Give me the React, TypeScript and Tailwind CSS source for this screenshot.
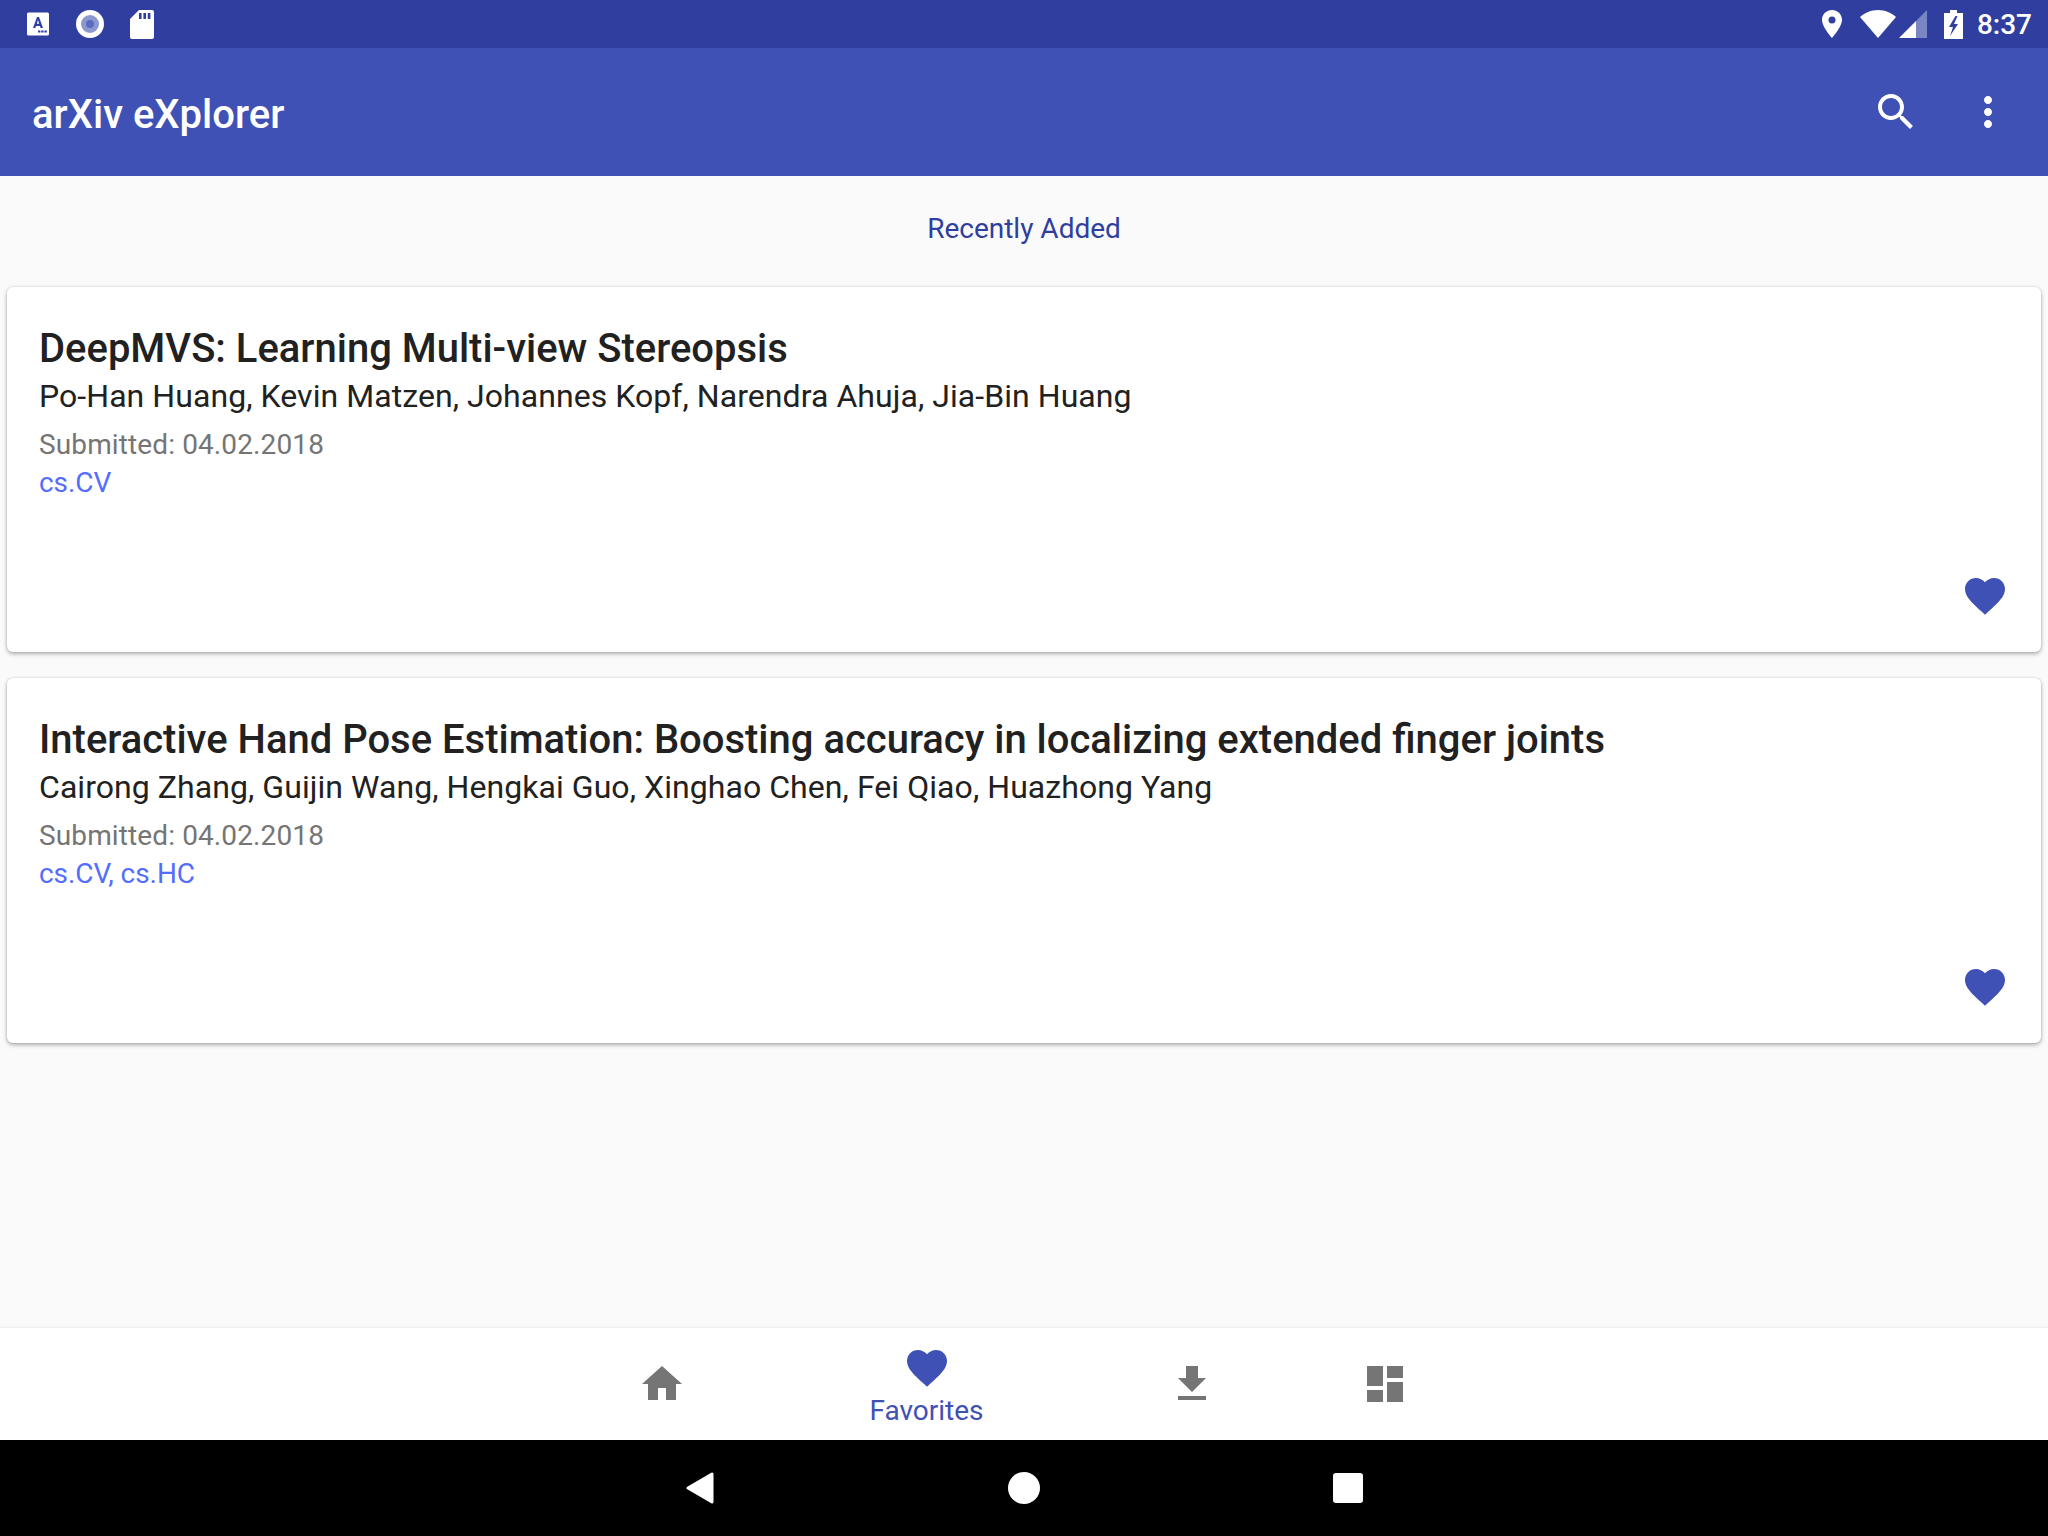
const HEART =
  'M12 21.35l-1.45-1.32C5.4 15.36 2 12.28 2 8.5 2 5.42 4.42 3 7.5 3c1.74 0 3.34.81 4.5 2.09C13.16 3.81 14.76 3 16.5 3 19.58 3 22 5.42 22 8.5c0 3.78-3.4 6.86-8.55 11.54L12 21.35z';

const papers = [
  {
    title: 'DeepMVS: Learning Multi-view Stereopsis',
    authors: 'Po-Han Huang, Kevin Matzen, Johannes Kopf, Narendra Ahuja, Jia-Bin Huang',
    submitted: 'Submitted: 04.02.2018',
    tags: 'cs.CV',
  },
  {
    title: 'Interactive Hand Pose Estimation: Boosting accuracy in localizing extended finger joints',
    authors: 'Cairong Zhang, Guijin Wang, Hengkai Guo, Xinghao Chen, Fei Qiao, Huazhong Yang',
    submitted: 'Submitted: 04.02.2018',
    tags: 'cs.CV, cs.HC',
  },
];

const Icon = ({ d, className }: { d: string; className: string }) => (
  <svg viewBox="0 0 24 24" className={className} fill="currentColor">
    <path d={d} />
  </svg>
);

const StatusBar = () => (
  <div className="flex h-12 items-center justify-between bg-[#303f9f] pl-[27px] pr-4 text-white">
    <div className="flex items-center">
      <svg viewBox="0 0 22 24" className="h-6 w-[22px]">
        <rect x="0" y="0.5" width="22" height="23" rx="1.5" fill="#fff" />
        <path d="M6 16 L10 5 H12 L16 16 H13.6 L13 14 H9 L8.4 16 Z M9.8 11.8 H12.2 L11 8 Z" fill="#303f9f" />
        <path d="M11 18.5h2.4v2H11zM14.2 18.5h2.4v2h-2.4zM17.4 18.5h2.4v2h-2.4z" fill="#303f9f" />
      </svg>
      <svg viewBox="0 0 28 28" className="ml-[27px] h-7 w-7">
        <circle cx="14" cy="14" r="14" fill="#fff" />
        <circle cx="14" cy="14" r="9" fill="#8c97d0" />
        <circle cx="14" cy="14" r="4" fill="#5c6bc0" />
      </svg>
      <svg viewBox="0 0 24 29" className="ml-[26px] h-[29px] w-6">
        <path d="M9 0 H22 A2 2 0 0 1 24 2 V27 A2 2 0 0 1 22 29 H2 A2 2 0 0 1 0 27 V9 Z" fill="#fff" />
        <path d="M9 3h2.6v6H9zM13.4 3H16v6h-2.6zM17.8 3h2.6v6h-2.6z" fill="#303f9f" />
      </svg>
    </div>
    <div className="flex items-center">
      <svg viewBox="0 0 20 28" className="h-7 w-5">
        <path
          fillRule="evenodd"
          d="M10 0 C4.5 0 0 4.4 0 9.8 C0 17 10 28 10 28 C10 28 20 17 20 9.8 C20 4.4 15.5 0 10 0 Z M10 6.4 A3.5 3.5 0 1 1 10 13.4 A3.5 3.5 0 1 1 10 6.4 Z"
          fill="#fff"
        />
      </svg>
      <svg viewBox="0 0 36 28" className="ml-[18px] h-7 w-9">
        <path d="M18 28 L0 7 C4.5 2.8 11 0 18 0 C25 0 31.5 2.8 36 7 Z" fill="#fff" />
      </svg>
      <svg viewBox="0 0 28 28" className="ml-[3px] h-7 w-7">
        <path d="M28 0 V28 H17 V11 Z" fill="#7a86c4" />
        <path d="M17 11 V28 H0 Z" fill="#fff" />
      </svg>
      <svg viewBox="0 0 19 29" className="ml-[17px] h-[29px] w-[19px]">
        <path d="M6 0 H13 V3 H19 V29 H0 V3 H6 Z" fill="#fff" />
        <path d="M11.5 6 L5 17 H9 L6 26 L14 14 H10 L13.5 6 Z" fill="#303f9f" />
      </svg>
      <span className="ml-[14px] pt-[2px] text-[28px] font-medium leading-none">8:37</span>
    </div>
  </div>
);

const Toolbar = () => (
  <div className="flex h-[128px] items-center justify-between bg-[#3f51b5] pl-8 pr-9 text-white">
    <span className="pt-[6px] text-[40px] font-medium leading-none">arXiv eXplorer</span>
    <div className="flex items-center gap-11">
      <Icon
        className="h-12 w-12"
        d="M15.5 14h-.79l-.28-.27C15.41 12.59 16 11.11 16 9.5 16 5.91 13.09 3 9.5 3S3 5.91 3 9.5 5.91 16 9.5 16c1.61 0 3.09-.59 4.23-1.57l.27.28v.79l5 4.99L20.49 19l-4.99-5zm-6 0C7.01 14 5 11.99 5 9.5S7.01 5 9.5 5 14 7.01 14 9.5 11.99 14 9.5 14z"
      />
      <Icon
        className="h-12 w-12"
        d="M12 8c1.1 0 2-.9 2-2s-.9-2-2-2-2 .9-2 2 .9 2 2 2zm0 2c-1.1 0-2 .9-2 2s.9 2 2 2 2-.9 2-2-.9-2-2-2zm0 6c-1.1 0-2 .9-2 2s.9 2 2 2 2-.9 2-2-.9-2-2-2z"
      />
    </div>
  </div>
);

const PaperCard = ({ paper }: { paper: (typeof papers)[number] }) => (
  <div className="flex h-[365px] flex-col rounded-[6px] bg-white pl-8 pr-8 pt-[38px] shadow-[0_2px_4px_rgba(0,0,0,0.3),0_0_2px_rgba(0,0,0,0.15)]">
    <h2 className="text-[39.97px] font-medium leading-[47px] text-[#212121]">{paper.title}</h2>
    <p className="text-[32px] leading-[48px] tracking-[0.06px] text-[#212121]">{paper.authors}</p>
    <p className="mt-[5px] text-[28px] leading-[40px] tracking-[0.12px] text-[#757575]">{paper.submitted}</p>
    <p className="text-[28px] leading-[36px] tracking-[-0.05px] text-[#536dfe]">{paper.tags}</p>
    <div className="mt-auto mb-8 flex justify-end">
      <Icon className="h-12 w-12 text-[#3f51b5]" d={HEART} />
    </div>
  </div>
);

const BottomNav = () => (
  <div className="flex h-[112px] justify-center bg-white pr-[2px] shadow-[0_-1px_2px_rgba(0,0,0,0.06)]">
    <div className="flex w-[193px] justify-center pt-8 text-[#757575]">
      <Icon className="h-12 w-12" d="M10 20v-6h4v6h5v-8h3L12 3 2 12h3v8z" />
    </div>
    <div className="flex w-[337px] flex-col items-center pt-4 text-[#3f51b5]">
      <Icon className="h-12 w-12" d={HEART} />
      <span className="mt-[3px] text-[28px] leading-[32px]">Favorites</span>
    </div>
    <div className="flex w-[193px] justify-center pt-8 text-[#757575]">
      <Icon className="h-12 w-12" d="M19 9h-4V3H9v6H5l7 7 7-7zM5 18v2h14v-2H5z" />
    </div>
    <div className="flex w-[193px] justify-center pt-8 text-[#757575]">
      <Icon className="h-12 w-12" d="M3 13h8V3H3v10zm0 8h8v-6H3v6zm10 0h8V11h-8v10zm0-18v6h8V3h-8z" />
    </div>
  </div>
);

const SystemNav = () => (
  <div className="flex h-24 items-center justify-center bg-black">
    <div className="flex w-[616px] justify-center">
      <svg viewBox="0 0 28 32" className="h-8 w-7">
        <path d="M26 2 V30 L2 16 Z" fill="#fff" stroke="#fff" strokeWidth="3" strokeLinejoin="round" />
      </svg>
    </div>
    <div className="h-8 w-8 rounded-full bg-white" />
    <div className="flex w-[616px] justify-center">
      <div className="h-[30px] w-[30px] rounded-[3px] bg-white" />
    </div>
  </div>
);

export default function App() {
  return (
    <div className="flex h-[1536px] w-[2048px] flex-col overflow-hidden bg-[#fafafa] font-['Roboto',sans-serif]">
      <StatusBar />
      <Toolbar />
      <div className="flex-1 px-[7px]">
        <p className="pt-[33px] pb-[38px] text-center text-[28px] leading-[40px] text-[#303f9f]">Recently Added</p>
        <div className="flex flex-col gap-[26px]">
          {papers.map((paper, key) => (
            <PaperCard paper={paper} key={key} />
          ))}
        </div>
      </div>
      <BottomNav />
      <SystemNav />
    </div>
  );
}
